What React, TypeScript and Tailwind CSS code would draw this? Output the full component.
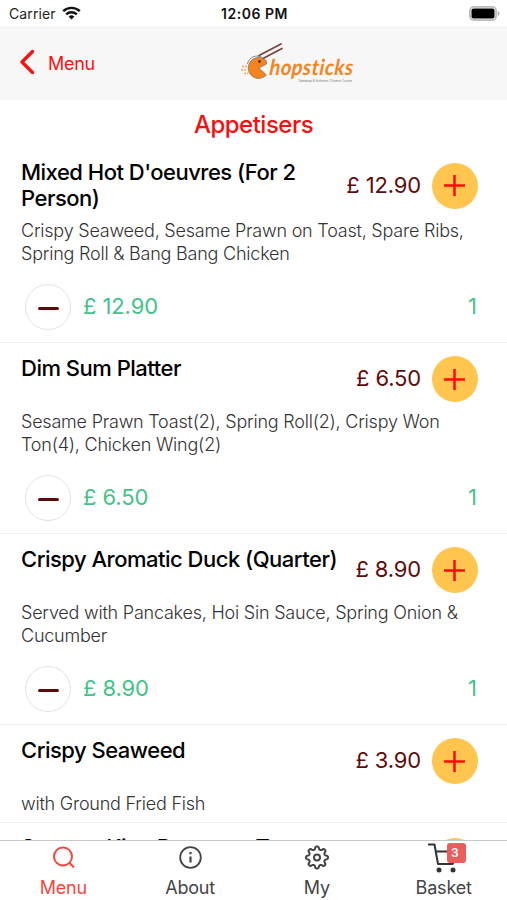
interface MenuItem {
  name: string
  description: string
  price: string
  quantity: number
}

const ITEMS: MenuItem[] = [
  { name: "Mixed Hot D'oeuvres (For 2 Person)", description: "Crispy Seaweed, Sesame Prawn on Toast, Spare Ribs, Spring Roll & Bang Bang Chicken", price: "12.90", quantity: 1 },
  { name: "Dim Sum Platter", description: "Sesame Prawn Toast(2), Spring Roll(2), Crispy Won Ton(4), Chicken Wing(2)", price: "6.50", quantity: 1 },
  { name: "Crispy Aromatic Duck (Quarter)", description: "Served with Pancakes, Hoi Sin Sauce, Spring Onion & Cucumber", price: "8.90", quantity: 1 },
  { name: "Crispy Seaweed", description: "with Ground Fried Fish", price: "3.90", quantity: 0 },
  { name: "Sesame King Prawn on Toast (6\u00a0Pieces)", description: "", price: "5.90", quantity: 0 },
]

// eight soft teeth around a 24px box
const GEAR_POINTS = Array.from({ length: 96 }, (_, i) => {
  const a = (i / 96) * Math.PI * 2
  const r = 9.6 + 1.5 * Math.tanh(1.8 * Math.cos(8 * a))
  return `${(12 + r * Math.cos(a)).toFixed(2)},${(12 + r * Math.sin(a)).toFixed(2)}`
}).join(" ")

function StatusBar() {
  return (
    <div className="grid h-[26px] shrink-0 grid-cols-[1fr_auto_1fr] items-center bg-white pl-[9px] pr-[7px] text-[14px] text-[#222]">
      <div className="flex items-center gap-[6px]">
        <span className="tracking-[0.1px]">Carrier</span>
        <svg width="19" height="14" viewBox="0 0 19 14" fill="none" stroke="#111" strokeWidth="2.4">
          <path d="M1.2 5.2a12 12 0 0 1 16.6 0" />
          <path d="M4.2 8.3a7.7 7.7 0 0 1 10.6 0" />
          <path d="M9.5 13.6 6.6 10.6a4.2 4.2 0 0 1 5.8 0z" fill="#111" stroke="none" />
        </svg>
      </div>
      <span className="text-center font-semibold tracking-[0.5px] text-[#111]">12:06 PM</span>
      <svg className="justify-self-end" width="31" height="15" viewBox="0 0 31 15">
        <rect x="0.9" y="0.9" width="26.2" height="13.2" rx="4" fill="#fff" stroke="#bbb" strokeWidth="1.8" />
        <rect x="2.5" y="2.5" width="23" height="10" rx="2" fill="#000" />
        <path d="M28.8 5v5q1.7-.8 1.7-2.5T28.8 5" fill="#aaa" />
      </svg>
    </div>
  )
}

function Logo() {
  return (
    <svg className="overflow-visible" width="114" height="42" viewBox="0 0 114 42">
      <path d="M18 13.5 40 2M22 16.5 41 6.5" stroke="#7d4038" strokeWidth="1.7" strokeLinecap="round" />
      <path d="M6.5 22C8 15 15 12 21.5 15.5" stroke="#7a7060" strokeWidth="0.9" fill="none" />
      <path d="M24.5 18A10.5 10.5 0 1 0 25.5 33L18 26l7.5-4q.5-2-1-4z" fill="#f5841f" stroke="#7a7060" strokeWidth="0.7" />
      <circle cx="18.5" cy="19.5" r="1.4" fill="#5d2a1c" />
      <path d="M1 24.5h6M0 28h6M3 31.5h4" stroke="#f7a55c" strokeWidth="1.4" strokeDasharray="2 1" />
      <text x="28" y="33.5" fontSize="22" fontStyle="italic" fontWeight="700" fill="#f5841f" textLength="84" lengthAdjust="spacingAndGlyphs" transform="translate(3 0) skewX(-5)" className="font-[Lato] tracking-[0.5px]">hopsticks</text>
      <text x="57" y="40" fontSize="3" fill="#777" textLength="54">Takeaway &amp; Authentic Chinese Cuisine</text>
    </svg>
  )
}

function Header() {
  return (
    <header className="flex h-[74px] shrink-0 items-center bg-[#f7f7f7] pl-[20px]">
      <button className="flex w-[221px] items-center gap-[13px] text-[18px] tracking-[-0.3px] text-[#fb1010]">
        <svg className="-mt-[3px]" width="15" height="26" viewBox="0 0 15 26" fill="none" stroke="currentColor" strokeWidth="3.3" strokeLinecap="round" strokeLinejoin="round">
          <path d="M12.5 2.5 2 13l10.500 10.500" />
        </svg>
        <span>Menu</span>
      </button>
      <Logo />
    </header>
  )
}

function ItemRow({ item }: { item: MenuItem }) {
  return (
    <section className="group border-b border-[#f1f1f1] px-[21px] pt-[13px]">
      <div className="flex min-h-[46px] items-center">
        <h2 className="-mt-px flex-1 self-start text-[22px] font-medium leading-[26px] tracking-[-0.5px] text-black group-last:-mt-[2px] group-last:tracking-[-0.65px]">{item.name}</h2>
        <span className="-mt-px text-[22px] tracking-[-0.15px] text-[#5e0b0b]">£ {item.price}</span>
        <button className="ml-[11px] mr-[8px] flex h-[46px] w-[46px] items-center justify-center rounded-full bg-[#ffc54f]">
          <svg className="-ml-px" width="21" height="21" viewBox="0 0 21 21" stroke="#ff0a0a" strokeWidth="2.5">
            <path d="M0 10.5h21M10.5 0v21" />
          </svg>
        </button>
      </div>
      <p className="mt-2 text-[18px] font-light leading-[23px] tracking-[-0.22px] text-[#333]">{item.description}</p>
      {item.quantity > 0 ? (
        <div className="mb-3 mt-[19px] flex items-center pl-1 pr-[9px] text-[22px] text-[#43c287]">
          <button className="flex h-[46px] w-[46px] items-center justify-center rounded-full border border-[#e2e2e2]">
            <span className="ml-px mt-[3px] h-[3px] w-[21px] rounded-full bg-[#5e0b0b]" />
          </button>
          <span className="-mt-0.5 ml-3 tracking-[-0.1px]">£ {item.price}</span>
          <span className="-mt-0.5 ml-auto">{item.quantity}</span>
        </div>
      ) : (
        <div className="h-[7px]" />
      )}
    </section>
  )
}

function TabBar() {
  return (
    <nav className="grid h-[60px] shrink-0 grid-cols-4 border-t border-[#c8c8c8] bg-white text-[18px] leading-[24px] tracking-[-0.2px] text-[#444]">
      <div className="flex flex-col items-center text-[#f4473c]">
        <svg width="24" height="35" viewBox="0 0 24 35" fill="none" stroke="currentColor" strokeWidth="2">
          <circle cx="12" cy="15.5" r="9" />
          <path d="m18.3 21.8 4.7 4.7" />
        </svg>
        <span>Menu</span>
      </div>
      <div className="flex flex-col items-center">
        <svg width="24" height="35" viewBox="0 0 24 35" fill="none" stroke="currentColor" strokeWidth="1.8">
          <circle cx="12.5" cy="16.5" r="10.3" />
          <path d="M12.5 15.5v6M12.5 11v2.2" strokeWidth="2.2" />
        </svg>
        <span>About</span>
      </div>
      <div className="flex flex-col items-center">
        <svg width="24" height="35" viewBox="0 -4.5 24 35" fill="none" stroke="currentColor" strokeWidth="2" strokeLinejoin="round">
          <circle cx="12" cy="12" r="3" />
          <polygon points={GEAR_POINTS} />
        </svg>
        <span>My</span>
      </div>
      <div className="flex flex-col items-center">
        <div className="relative h-[35px]">
          <svg width="32" height="35" viewBox="0 0 32 35" fill="none" stroke="#333" strokeWidth="2" strokeLinejoin="round">
            <path d="M0 3.5h6.5l3.5 19.5h14.5l2-3M7.5 10.5H21" />
            <circle cx="11" cy="29" r="2.5" fill="#333" stroke="none" />
            <circle cx="25" cy="29" r="2.5" fill="#333" stroke="none" />
          </svg>
          <span className="absolute left-[19px] top-[2px] flex h-[20px] w-[19px] items-center justify-center rounded-[3px] bg-[#e95d5d] pr-[3px] text-[12px] font-semibold text-white">3</span>
        </div>
        <span>Basket</span>
      </div>
    </nav>
  )
}

export default function App() {
  return (
    <div className="flex h-[900px] w-full flex-col overflow-hidden bg-white font-[Inter,sans-serif]">
      <StatusBar />
      <Header />
      <main className="min-h-0 flex-1 overflow-hidden">
        <h1 className="h-[47px] pt-[10px] text-center text-[24px] font-medium leading-[30px] tracking-[-0.5px] text-[#f90d0d]">Appetisers</h1>
        {ITEMS.map(item => <ItemRow key={item.name} item={item} />)}
      </main>
      <TabBar />
    </div>
  )
}
